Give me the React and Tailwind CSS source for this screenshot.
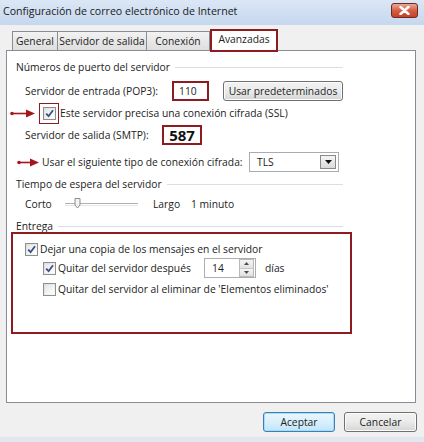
import React from "react";

function Check({ checked = true }) {
  return (
    <span className="w-[13px] h-[13px] border border-[#8e8f8f] bg-linear-to-br from-[#dcdcdc] to-[#fbfbfb] flex items-center justify-center shrink-0">
      <span className="w-[9px] h-[9px] bg-linear-to-br from-[#e6e6e6] to-[#ffffff] flex items-center justify-center">
        {checked && (
          <svg width="9" height="9" viewBox="0 0 9 9">
            <path d="M1.2 4.6 L3.6 7.2 L8 1.2" fill="none" stroke="#3c4f86" strokeWidth="1.8" />
          </svg>
        )}
      </span>
    </span>
  );
}

function Arrow({ w }) {
  return (
    <svg width={w} height="9" viewBox={`0 0 ${w} 9`} className="shrink-0">
      <circle cx="2" cy="4.5" r="1.8" fill="#a3171c" />
      <line x1="2" y1="4.5" x2={w - 8} y2="4.5" stroke="#a3171c" strokeWidth="1.6" />
      <polygon points={`${w - 9},0.5 ${w},4.5 ${w - 9},8.5`} fill="#a3171c" />
    </svg>
  );
}

function GroupHeader({ title, className = "" }) {
  return (
    <div className={`flex items-center ml-[9px] w-[327px] ${className}`}>
      <span className="whitespace-nowrap">{title}</span>
      <span className="flex-1 h-px bg-[#d5dfe5] ml-[5px]" />
    </div>
  );
}

function WinButton({ children, w, primary = false }) {
  return (
    <div
      className={`${w} h-[20px] rounded-[3px] border flex items-center justify-center whitespace-nowrap ${
        primary
          ? "border-[#3c7fb1] bg-linear-to-b from-[#eaf6fd] via-[#d9f0fc] to-[#bee6fd] shadow-[0_0_0_1px_#a9dbf6_inset]"
          : "border-[#707070] bg-linear-to-b from-[#f2f2f2] via-[#ebebeb] to-[#d5d5d5] shadow-[0_0_0_1px_#fcfcfc_inset]"
      }`}
    >
      {children}
    </div>
  );
}

export default function App() {
  return (
    <div className="w-[424px] h-[442px] bg-[#f0f0f0] flex flex-col text-[10.3px] text-[#222] font-['Open_Sans',sans-serif] leading-none overflow-hidden">
      {/* Title bar */}
      <div className="h-[25px] shrink-0 bg-linear-to-b from-[#dbe7f6] to-[#c6d7ee] flex items-start justify-between">
        <span className="text-[10.6px] text-[#1a1a1a] ml-[3px] mt-[6px] whitespace-nowrap">
          Configuración de correo electrónico de Internet
        </span>
        <div className="w-[27px] h-[15px] mt-[3px] mr-[6px] rounded-[3px] border border-[#6e2a22] bg-linear-to-b from-[#eaa996] via-[#d45e44] to-[#c4412a] flex items-center justify-center">
          <svg width="11" height="9" viewBox="0 0 11 9">
            <path d="M1.5 1 L9.5 8 M9.5 1 L1.5 8" stroke="#ffffff" strokeWidth="2.4" strokeLinecap="round" />
          </svg>
        </div>
      </div>

      {/* Tabs */}
      <div className="h-[25px] shrink-0 flex items-end pl-[12px] relative z-10">
        <div className="h-[19px] w-[46px] border border-b-0 border-[#898c95] bg-linear-to-b from-[#f2f2f2] to-[#dedede] flex items-center justify-center">
          General
        </div>
        <div className="h-[19px] w-[89px] border border-l-0 border-b-0 border-[#898c95] bg-linear-to-b from-[#f2f2f2] to-[#dedede] flex items-center justify-center whitespace-nowrap">
          Servidor de salida
        </div>
        <div className="h-[19px] w-[63px] border border-l-0 border-b-0 border-[#898c95] bg-linear-to-b from-[#f2f2f2] to-[#dedede] flex items-center justify-center">
          Conexión
        </div>
        <div className="h-[23px] w-[68px] -mb-[2px] border-2 border-[#8e1b1f] bg-white flex items-start justify-center pt-[3px]">
          Avanzadas
        </div>
      </div>

      {/* Panel */}
      <div className="ml-[6px] w-[410px] h-[353px] shrink-0 border border-[#898c95] bg-white flex flex-col">
        <GroupHeader title="Números de puerto del servidor" className="mt-[8px] h-[17px]" />

        <div className="flex items-center mt-[5px] h-[20px]">
          <span className="ml-[18px] w-[147px] whitespace-nowrap">Servidor de entrada (POP3):</span>
          <div className="w-[37px] h-[20px] border-2 border-[#8e1b1f] flex items-center pl-[5px]">110</div>
          <div className="ml-[14px]">
            <WinButton w="w-[120px]">Usar predeterminados</WinButton>
          </div>
        </div>

        <div className="flex items-center mt-[2px] h-[21px]">
          <span className="ml-[3px]">
            <Arrow w={25} />
          </span>
          <div className="ml-[4px] w-[20px] h-[21px] border border-[#8e1b1f] flex items-center justify-center">
            <Check />
          </div>
          <span className="ml-[1px] whitespace-nowrap">Este servidor precisa una conexión cifrada (SSL)</span>
        </div>

        <div className="flex items-center mt-[1px] h-[20px]">
          <span className="ml-[18px] w-[137px] whitespace-nowrap">Servidor de salida (SMTP):</span>
          <div className="w-[40px] h-[20px] border-2 border-[#8e1b1f] flex items-center justify-center font-bold text-[15px] text-[#111]">
            587
          </div>
        </div>

        <div className="flex items-center mt-[7px] h-[20px]">
          <span className="ml-[10px]">
            <Arrow w={22} />
          </span>
          <span className="ml-[3px] w-[207px] whitespace-nowrap">Usar el siguiente tipo de conexión cifrada:</span>
          <div className="w-[90px] h-[20px] border border-[#a5acb5] flex items-center justify-between pl-[7px] pr-[2px]">
            <span>TLS</span>
            <div className="w-[16px] h-[14px] border border-[#8a8a8a] bg-linear-to-b from-[#f6f6f6] to-[#dadada] flex items-center justify-center">
              <svg width="7" height="4" viewBox="0 0 7 4">
                <polygon points="0,0 7,0 3.5,4" fill="#111" />
              </svg>
            </div>
          </div>
        </div>

        <GroupHeader title="Tiempo de espera del servidor" className="mt-[4px] h-[17px]" />

        <div className="flex items-center mt-[3px] h-[16px]">
          <span className="ml-[18px] w-[40px]">Corto</span>
          <div className="w-[73px] h-[12px] relative flex items-center">
            <div className="w-full h-[3px] border-t border-[#b0b0b0] border-b border-b-[#e6e6e6]" />
            <svg width="7" height="11" viewBox="0 0 7 11" className="absolute left-[9px] top-0">
              <path d="M1 0.5 H6 V7 L3.5 10 L1 7 Z" fill="#f3f3f3" stroke="#8d8d8d" strokeWidth="1" />
            </svg>
          </div>
          <span className="ml-[15px] w-[38px]">Largo</span>
          <span>1 minuto</span>
        </div>

        <GroupHeader title="Entrega" className="mt-[8px] h-[12px]" />

        <div className="ml-[4px] w-[341px] h-[102px] border-2 border-[#8e1b1f] flex flex-col">
          <div className="flex items-center gap-[2px] ml-[12px] mt-[9px] h-[13px]">
            <Check />
            <span className="whitespace-nowrap">Dejar una copia de los mensajes en el servidor</span>
          </div>
          <div className="flex items-center ml-[30px] mt-[2px] h-[20px]">
            <Check />
            <span className="ml-[2px] w-[146px] whitespace-nowrap">Quitar del servidor después</span>
            <div className="w-[52px] h-[20px] border border-[#abadb3] flex items-center justify-between">
              <span className="ml-[7px]">14</span>
              <div className="w-[15px] h-[18px] mr-[1px] flex flex-col border border-[#b9b9b9]">
                <div className="flex-1 bg-linear-to-b from-[#f5f5f5] to-[#e2e2e2] border-b border-[#c6c6c6] flex items-center justify-center">
                  <svg width="5" height="3" viewBox="0 0 5 3">
                    <polygon points="0,3 5,3 2.5,0" fill="#4d4d4d" />
                  </svg>
                </div>
                <div className="flex-1 bg-linear-to-b from-[#f5f5f5] to-[#e2e2e2] flex items-center justify-center">
                  <svg width="5" height="3" viewBox="0 0 5 3">
                    <polygon points="0,0 5,0 2.5,3" fill="#4d4d4d" />
                  </svg>
                </div>
              </div>
            </div>
            <span className="ml-[9px]">días</span>
          </div>
          <div className="flex items-center ml-[30px] mt-[4px] h-[14px]">
            <Check checked={false} />
            <span className="ml-[2px] whitespace-nowrap">Quitar del servidor al eliminar de 'Elementos eliminados'</span>
          </div>
        </div>
      </div>

      {/* Buttons */}
      <div className="flex justify-end gap-[9px] mt-[9px] mr-[7px]">
        <WinButton w="w-[72px]" primary>
          Aceptar
        </WinButton>
        <WinButton w="w-[73px]">Cancelar</WinButton>
      </div>
      <div className="flex-1" />
      <div className="h-[5px] bg-[#dfe7f1]" />
    </div>
  );
}
